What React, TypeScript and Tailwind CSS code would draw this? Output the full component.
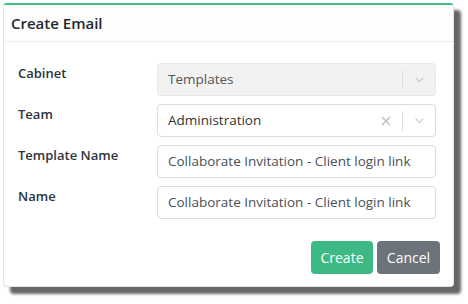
import React from 'react'

function Chevron() {
  return (
    <svg width="13" height="13" viewBox="0 0 20 20" className="text-[#c7c7c7]">
      <path d="M4 7l6 6 6-6" fill="none" stroke="currentColor" strokeWidth="1.6" />
    </svg>
  )
}

function SelectBox({ value, disabled, clearable }: { value: string; disabled?: boolean; clearable?: boolean }) {
  return (
    <div
      className={`flex items-center h-[33px] rounded-[4px] border ${
        disabled ? 'bg-[#f2f2f2] border-[#e8e8e8]' : 'bg-white border-[#dcdcdc]'
      }`}
    >
      <span className={`flex-1 pl-[10px] text-[13.5px] ${disabled ? 'text-[#555]' : 'text-[#333]'}`}>{value}</span>
      {clearable && (
        <span className="pl-[6px] pr-[11px] text-[#c2c2c2]">
          <svg width="10" height="10" viewBox="0 0 10 10">
            <path d="M1 1l8 8M9 1l-8 8" stroke="currentColor" strokeWidth="1.6" />
          </svg>
        </span>
      )}
      <span className="w-px h-[20px] bg-[#dedede]" />
      <span className="w-[32px] flex justify-center">
        <Chevron />
      </span>
    </div>
  )
}

function TextBox({ value }: { value: string }) {
  return (
    <div className="flex items-center h-[33px] rounded-[4px] border border-[#dcdcdc] bg-white pl-[10px] text-[13.5px] text-[#495057]">
      {value}
    </div>
  )
}

export default function App() {
  const rows = [
    { label: 'Cabinet', field: <SelectBox value="Templates" disabled /> },
    { label: 'Team', field: <SelectBox value="Administration" clearable /> },
    { label: 'Template Name', field: <TextBox value="Collaborate Invitation - Client login link" /> },
    { label: 'Name', field: <TextBox value="Collaborate Invitation - Client login link" /> },
  ]

  return (
    <div className="w-[468px] h-[304px] bg-white pt-[3px] pl-[3px]" style={{ fontFamily: '"Open Sans", sans-serif' }}>
      <div className="w-[451px] h-[284px] flex flex-col bg-white rounded-[4px] border border-[#e3e3e3] border-t-2 border-t-[#3cbf84] shadow-[7px_7px_3px_rgba(0,0,0,0.6)]">
        <div className="h-[37px] flex items-center px-[7px] bg-[#fdfdfd] border-b border-[#eeeeee]">
          <h2 className="text-[15px] font-semibold text-[#23282d]">Create Email</h2>
        </div>

        <div className="flex-1 flex flex-col pt-[21px] px-[14px]">
          <div className="flex flex-col gap-[8px]">
            {rows.map((r) => (
              <div key={r.label} className="flex items-start">
                <label className="w-[139px] pt-[1px] text-[13px] font-semibold text-[#2b3440]">{r.label}</label>
                <div className="w-[279px]">{r.field}</div>
              </div>
            ))}
          </div>

          <div className="flex justify-end gap-[4px] mt-auto mb-[12px] -mr-[1px]">
            <button className="h-[33px] w-[62px] rounded-[4px] bg-[#3dba84] text-white text-[14px]">Create</button>
            <button className="h-[33px] w-[63px] rounded-[4px] bg-[#6c737b] text-white text-[14px]">Cancel</button>
          </div>
        </div>
      </div>
    </div>
  )
}
